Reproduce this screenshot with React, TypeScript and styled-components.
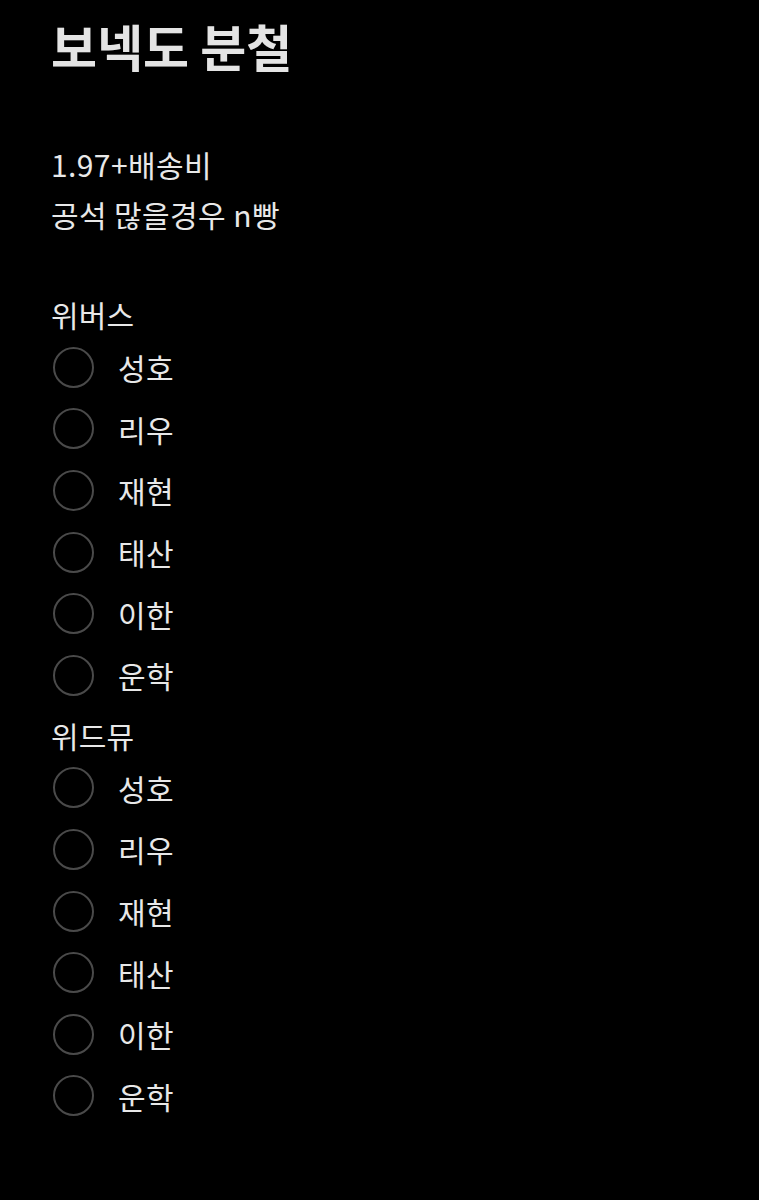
import React from "react";
import styled, { createGlobalStyle } from "styled-components";

const Global = createGlobalStyle`
  html, body { margin: 0; padding: 0; background: #000; }
  body { font-family: "Noto Sans CJK KR", "Noto Sans", sans-serif; color: #e8e8e8; }
`;

const Page = styled.div`
  min-height: 1200px;
  background: #000;
  padding: 16px 0 0 51px;
  box-sizing: border-box;
`;

const Title = styled.h1`
  margin: 0;
  font-size: 50px;
  line-height: 58px;
  font-weight: 700;
  color: #e4e4e4;
`;

const Desc = styled.div`
  margin-top: 65px;
  display: flex;
  flex-direction: column;
`;

const DescLine = styled.div`
  font-size: 30px;
  line-height: 50px;
  font-weight: 400;
  letter-spacing: 0.4px;
`;

const Groups = styled.div`
  margin-top: 51px;
  display: flex;
  flex-direction: column;
  gap: 3px;
`;

const Group = styled.div`
  display: flex;
  flex-direction: column;
`;

const GroupLabel = styled.div`
  font-size: 30px;
  line-height: 48px;
  letter-spacing: 0.2px;
`;

const Row = styled.label`
  display: flex;
  align-items: center;
  height: 61.6px;
  gap: 24px;
`;

const Radio = styled.span`
  width: 41px;
  height: 41px;
  box-sizing: border-box;
  border: 2.5px solid #4a4a4a;
  border-radius: 50%;
  margin-left: 2px;
  margin-top: -3px;
  flex: none;
`;

const RowText = styled.span`
  font-size: 30px;
  letter-spacing: 0.4px;
  margin-top: -3px;
`;

const members = ["성호", "리우", "재현", "태산", "이한", "운학"];
const groups = ["위버스", "위드뮤"];

export default function App() {
  return (
    <>
      <Global />
      <Page>
        <Title>보넥도 분철</Title>
        <Desc>
          <DescLine>1.97+배송비</DescLine>
          <DescLine>공석 많을경우 n빵</DescLine>
        </Desc>
        <Groups>
          {groups.map((g) => (
            <Group key={g}>
              <GroupLabel>{g}</GroupLabel>
              {members.map((m) => (
                <Row key={m}>
                  <Radio />
                  <RowText>{m}</RowText>
                </Row>
              ))}
            </Group>
          ))}
        </Groups>
      </Page>
    </>
  );
}
